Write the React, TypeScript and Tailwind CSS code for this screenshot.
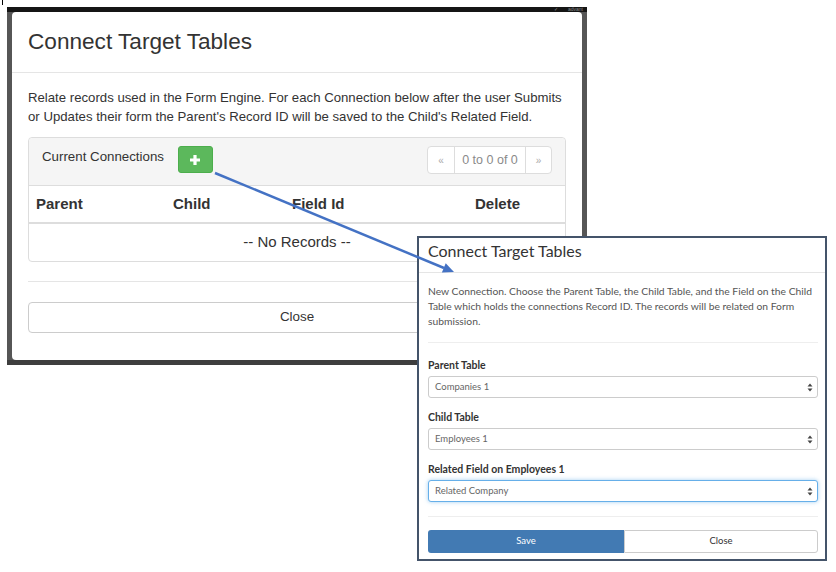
import React from 'react';

const sans = "font-['Liberation_Sans',Arial,sans-serif]";
const lato = "font-['Lato','Noto_Sans',sans-serif]";

function SelectArrows() {
  return (
    <svg width="6" height="9" viewBox="0 0 6 9" className="ml-auto">
      <path d="M3 0.5 L5.5 3.5 L0.5 3.5 Z" fill="#444" />
      <path d="M3 8.5 L5.5 5.5 L0.5 5.5 Z" fill="#444" />
    </svg>
  );
}

function FakeSelect({ value, focused }: { value: string; focused?: boolean }) {
  return (
    <div
      className={`h-[22px] rounded-[3px] flex items-center pl-[6px] pr-[4px] text-[9.5px] text-[#666] bg-white border ${
        focused ? 'border-[#66afe9] shadow-[0_0_4px_rgba(102,175,233,0.6)]' : 'border-[#ccc]'
      }`}
    >
      <span>{value}</span>
      <SelectArrows />
    </div>
  );
}

export default function App() {
  return (
    <div className="relative w-[836px] h-[572px] bg-white overflow-hidden">
      <div className="absolute left-[2px] top-0 w-px h-[5px] bg-black" />

      {/* first screenshot: modal over dark page */}
      <div className={`ml-[7px] mt-[7px] w-[580px] h-[358px] bg-[#565656] flex flex-col ${sans}`}>
        <div className="h-[5px] bg-[#151515] flex justify-end items-center pr-[4px]">
          <span className="text-[#8a8a8a] text-[5px] leading-[5px] mr-[10px]">&#x2713;</span>
          <span className="text-[#8a8a8a] text-[5px] leading-[5px]">advant</span>
        </div>

        <div className="ml-[5px] w-[570px] h-[348px] bg-white rounded-[4px] flex flex-col">
          <div className="h-[61px] flex items-center px-4 border-b border-[#e5e5e5]">
            <h4 className="text-[22.6px] text-[#333]">Connect Target Tables</h4>
          </div>

          <div className="px-4 pt-[15px]">
            <p className="text-[13.2px] leading-[19px] text-[#333]">
              Relate records used in the Form Engine. For each Connection below after the user Submits
              or Updates their form the Parent's Record ID will be saved to the Child's Related Field.
            </p>

            {/* panel */}
            <div className="mt-[11px] border border-[#ddd] rounded-[4px]">
              <div className="h-[48px] bg-[#f5f5f5] border-b border-[#ddd] rounded-t-[4px] flex items-start pt-[8px] px-[13px]">
                <span className="text-[13.3px] leading-[19px] text-[#333] mt-[1px]">Current Connections</span>
                <button className="ml-[14px] w-[35px] h-[27px] rounded-[3px] bg-[#5cb85c] border border-[#4cae4c] flex items-center justify-center">
                  <svg width="12" height="12" viewBox="0 0 12 12">
                    <path d="M6 1 V11 M1 6 H11" stroke="#fff" strokeWidth="3.2" />
                  </svg>
                </button>
                <div className="ml-auto flex h-[28px] border border-[#ddd] rounded-[4px] bg-white text-[#8a8a8a]">
                  <div className="w-[26px] flex items-center justify-center text-[10px] text-[#aaa]">&laquo;</div>
                  <div className="w-[71px] flex items-center justify-center border-l border-[#ddd] text-[12.5px]">0 to 0 of 0</div>
                  <div className="w-[26px] flex items-center justify-center border-l border-[#ddd] text-[10px] text-[#aaa]">&raquo;</div>
                </div>
              </div>

              <div className="grid grid-cols-[137px_119px_183px_1fr] h-[38px] border-b-2 border-[#ddd] items-center text-[15px] font-bold text-[#333]">
                <div className="pl-[7px]">Parent</div>
                <div className="pl-[7px]">Child</div>
                <div className="pl-[7px]">Field Id</div>
                <div className="pl-[7px]">Delete</div>
              </div>
              <div className="h-[37px] flex items-center justify-center text-[15px] text-[#333]">-- No Records --</div>
            </div>

            <div className="mt-[19px] border-t border-[#e5e5e5]" />

            <button className="mt-[20px] w-full h-[31px] border border-[#ccc] rounded-[4px] text-[13.4px] text-[#333] bg-white">
              Close
            </button>
          </div>
        </div>

        <div className="h-[5px] bg-[#3e3e3e]" />
      </div>

      {/* second screenshot: new connection dialog */}
      <div className={`absolute left-[417px] top-[236px] w-[410px] h-[325px] border-2 border-[#44546a] bg-white flex flex-col ${lato}`}>
        <div className="h-[35px] border-b border-[#e5e5e5] pl-[9px] pt-[1px]">
          <span className="text-[16px] leading-[20px] text-[#333]">Connect Target Tables</span>
        </div>

        <div className="pl-[9px] pr-[7px]">
          <p className="pt-[11px] text-[10.3px] leading-[15px] text-[#555]">
            New Connection. Choose the Parent Table, the Child Table, and the Field on the Child
            Table which holds the connections Record ID. The records will be related on Form
            submission.
          </p>

          <div className="mt-[13px] border-t border-[#eee]" />

          <div className="mt-[15px] text-[10.5px] leading-[14px] font-bold text-[#333]">Parent Table</div>
          <div className="mt-[4px]">
            <FakeSelect value="Companies 1" />
          </div>

          <div className="mt-[12px] text-[10.5px] leading-[14px] font-bold text-[#333]">Child Table</div>
          <div className="mt-[4px]">
            <FakeSelect value="Employees 1" />
          </div>

          <div className="mt-[12px] text-[10.5px] leading-[14px] font-bold text-[#333]">Related Field on Employees 1</div>
          <div className="mt-[4px]">
            <FakeSelect value="Related Company" focused />
          </div>

          <div className="mt-[14px] border-t border-[#eee]" />

          <div className="mt-[13px] flex h-[23px] text-[9.5px]">
            <button className="w-[196px] bg-[#427ab3] text-white rounded-l-[3px]">Save</button>
            <button className="flex-1 border border-[#ccc] rounded-r-[3px] text-[#333] bg-white">Close</button>
          </div>
        </div>
      </div>

      {/* callout arrow */}
      <svg className="absolute inset-0 pointer-events-none" width="836" height="572">
        <line x1="215" y1="173" x2="444" y2="268" stroke="#4472c4" strokeWidth="2.5" />
        <polygon points="454,272 441.9,272.4 445.7,263.2" fill="#4472c4" />
      </svg>
    </div>
  );
}
